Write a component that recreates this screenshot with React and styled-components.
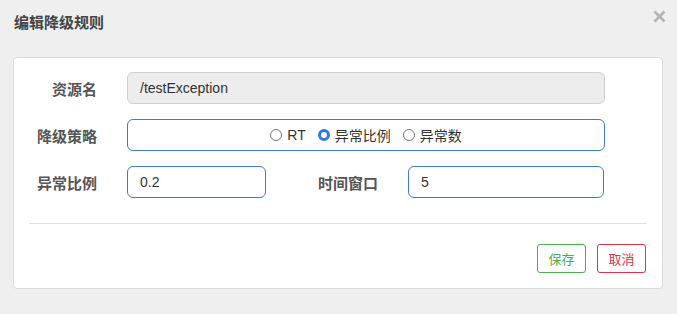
import React from 'react';
import styled, {createGlobalStyle} from 'styled-components';

const GlobalStyle = createGlobalStyle`
  body {
    margin: 0;
    background: #efefef;
    font-family: "Liberation Sans", "Noto Sans CJK SC", sans-serif;
  }
`

const App = () => {
    return (
        <Page>
            <GlobalStyle/>
            <Header>
                <Title>编辑降级规则</Title>
                <Close>
                    <svg width="13" height="13" viewBox="0 0 13 13">
                        <path d="M1.5 1.5 L11.5 11.5 M11.5 1.5 L1.5 11.5" stroke="#b4b4b4" strokeWidth="2.6"/>
                    </svg>
                </Close>
            </Header>
            <Card>
                <Form>
                    <Row>
                        <Label>资源名</Label>
                        <Input $disabled $width="478px">/testException</Input>
                    </Row>
                    <Row>
                        <Label>降级策略</Label>
                        <RadioBox>
                            <RadioOption><Radio/>RT</RadioOption>
                            <RadioOption><Radio $checked/>异常比例</RadioOption>
                            <RadioOption><Radio/>异常数</RadioOption>
                        </RadioBox>
                    </Row>
                    <Row>
                        <Label>异常比例</Label>
                        <Input $width="139px">0.2</Input>
                        <Label $width="112px">时间窗口</Label>
                        <Input $width="196px">5</Input>
                    </Row>
                </Form>
                <Divider/>
                <Footer>
                    <Button $color="#4cae4c">保存</Button>
                    <Button $color="#dc3545">取消</Button>
                </Footer>
            </Card>
        </Page>
    );
};

const Page = styled.div`
  width: 677px;
  height: 314px;
  padding: 0 14px 0 13px;
  box-sizing: border-box;
`

const Header = styled.div`
  height: 57px;
  display: flex;
  justify-content: space-between;
  align-items: flex-start;
`

const Title = styled.div`
  margin-top: 14px;
  padding-left: 1px;
  font-size: 15px;
  line-height: 18px;
  font-weight: bold;
  color: #444;
`

const Close = styled.div`
  margin-top: 10px;
  margin-right: -3px;
  display: flex;
`

const Card = styled.div`
  background: #fff;
  border: 1px solid #dcdcdc;
  border-radius: 4px;
  padding-bottom: 15px;
`

const Form = styled.div`
  display: flex;
  flex-direction: column;
  gap: 15px;
  padding-top: 14px;
`

const Row = styled.div`
  display: flex;
  align-items: center;
  height: 32px;
`

const Label = styled.div`
  width: ${p => p.$width || '83px'};
  margin-right: 30px;
  text-align: right;
  font-size: 15px;
  font-weight: bold;
  color: #555;
`

const Input = styled.div`
  width: ${p => p.$width};
  height: 32px;
  box-sizing: border-box;
  display: flex;
  align-items: center;
  padding-left: 12px;
  font-size: 14px;
  color: #333;
  border-radius: 6px;
  border: 1px solid ${p => p.$disabled ? '#cfcfcf' : '#3f7cc0'};
  background: ${p => p.$disabled ? '#ededed' : '#fff'};
`

const RadioBox = styled.div`
  width: 478px;
  height: 32px;
  box-sizing: border-box;
  display: flex;
  align-items: center;
  justify-content: center;
  gap: 12px;
  border: 1px solid #3f7cc0;
  border-radius: 6px;
  font-size: 14px;
  color: #333;
`

const RadioOption = styled.label`
  display: flex;
  align-items: center;
  gap: 5px;
`

const Radio = styled.span`
  width: 12px;
  height: 12px;
  box-sizing: border-box;
  border-radius: 50%;
  border: ${p => p.$checked ? '3.5px solid #2a7ae2' : '1px solid #777'};
  background: #fff;
`

const Divider = styled.div`
  height: 1px;
  background: #e0e0e0;
  margin: 25px 15px 0;
`

const Footer = styled.div`
  display: flex;
  justify-content: flex-end;
  gap: 11px;
  margin-top: 20px;
  padding-right: 16px;
`

const Button = styled.button`
  width: 49px;
  height: 29px;
  padding: 0;
  background: #fff;
  border: 1px solid ${p => p.$color};
  border-radius: 3px;
  color: ${p => p.$color};
  font-family: inherit;
  font-size: 13px;
`

export default App;
